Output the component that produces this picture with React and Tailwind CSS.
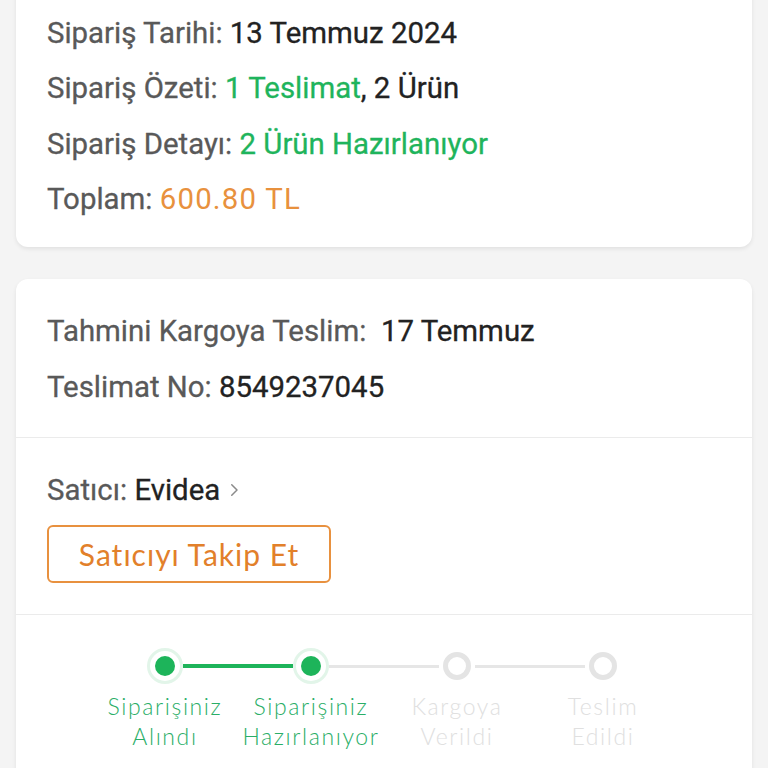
import React from "react";

const roboto = { fontFamily: "Roboto, 'Noto Sans', sans-serif" };

function Row({ label, children, h = "h-[55.5px]" }) {
  return (
    <div className={`${h} flex items-center text-[29.4px] text-[#222] [-webkit-text-stroke:0.3px]`} style={roboto}>
      <span className="text-[#595959]">{label}</span>
      {children}
    </div>
  );
}

function Step({ label1, label2, active, leftLine, rightLine }) {
  const lineCls = (c) =>
    c === "green"
      ? "flex-1 h-[4px] bg-[#1db45a]"
      : c === "gray"
      ? "flex-1 h-[3px] bg-[#e6e6e6]"
      : "flex-1";
  return (
    <div className="w-[146px] flex flex-col items-center">
      <div className="w-full h-[40px] flex items-center">
        <div className={lineCls(leftLine)} />
        {active ? (
          <div className="w-[36px] h-[36px] rounded-full border-[3px] border-[#e2f5e9] bg-white flex items-center justify-center shrink-0">
            <div className="w-[20px] h-[20px] rounded-full bg-[#1db45a]" />
          </div>
        ) : (
          <div className="w-[36px] h-[36px] flex items-center justify-center shrink-0">
            <div className="w-[28px] h-[28px] rounded-full border-[5px] border-[#e4e4e4] bg-white" />
          </div>
        )}
        <div className={lineCls(rightLine)} />
      </div>
      <div
        className={`mt-[5px] text-center text-[23px] leading-[30px] font-light tracking-[1.6px] whitespace-nowrap ${
          active ? "text-[#2aae67]" : "text-[#e0e0e0]"
        }`}
        style={{ fontFamily: "Lato, 'Open Sans', sans-serif" }}
      >
        <div>{label1}</div>
        <div>{label2}</div>
      </div>
    </div>
  );
}

export default function App() {
  return (
    <div className="w-[768px] h-[768px] overflow-hidden bg-[#f4f4f4]">
      <div className="mx-4 -mt-[30px] pt-[35px] pb-[20px] px-[31px] bg-white rounded-xl shadow-[0_2px_4px_rgba(0,0,0,0.08)]">
        <Row label="Sipariş Tarihi:">&nbsp;13 Temmuz 2024</Row>
        <Row label="Sipariş Özeti:">
          &nbsp;<span className="text-[#1fb45c]">1 Teslimat</span>, 2 Ürün
        </Row>
        <Row label="Sipariş Detayı:">
          &nbsp;<span className="text-[#1fb45c]">2 Ürün Hazırlanıyor</span>
        </Row>
        <Row label="Toplam:">
          &nbsp;<span className="text-[#e8913d] [-webkit-text-stroke:0px] tracking-[1.2px]">600.80 TL</span>
        </Row>
      </div>

      <div className="mx-4 mt-[32px] bg-white rounded-xl shadow-[0_2px_4px_rgba(0,0,0,0.08)]">
        <div className="pt-[24px] pb-[22px] px-[31px] border-b border-[#ebebeb]">
          <Row label="Tahmini Kargoya Teslim:" h="h-[56px]">
            <span className="whitespace-pre">{"  17 Temmuz"}</span>
          </Row>
          <Row label="Teslimat No:" h="h-[56px]">&nbsp;8549237045</Row>
        </div>
        <div className="pt-[24px] pb-[31px] px-[31px] border-b border-[#ebebeb]">
          <div className="h-[56px] flex items-center text-[29.4px] text-[#222] [-webkit-text-stroke:0.3px]" style={roboto}>
            <span className="text-[#595959]">Satıcı:</span>
            <span>&nbsp;Evidea</span>
            <svg width="18" height="18" viewBox="0 0 24 24" className="ml-[5px]" fill="none" stroke="#8a8a8a" strokeWidth="2" strokeLinecap="round" strokeLinejoin="round">
              <path d="M9 5l7 7-7 7" />
            </svg>
          </div>
          <button
            className="mt-[7px] w-[284px] h-[58px] rounded-[6px] border-2 border-[#e8913f] text-[#e2802a] text-[30px] tracking-[1px] flex items-center justify-center"
            style={{ fontFamily: "Lato, 'Open Sans', sans-serif" }}
          >
            Satıcıyı Takip Et
          </button>
        </div>
        <div className="pt-[31px] pb-[40px] flex justify-center">
          <Step label1="Siparişiniz" label2="Alındı" active leftLine="none" rightLine="green" />
          <Step label1="Siparişiniz" label2="Hazırlanıyor" active leftLine="green" rightLine="gray" />
          <Step label1="Kargoya" label2="Verildi" leftLine="gray" rightLine="gray" />
          <Step label1="Teslim" label2="Edildi" leftLine="gray" rightLine="none" />
        </div>
      </div>
    </div>
  );
}
